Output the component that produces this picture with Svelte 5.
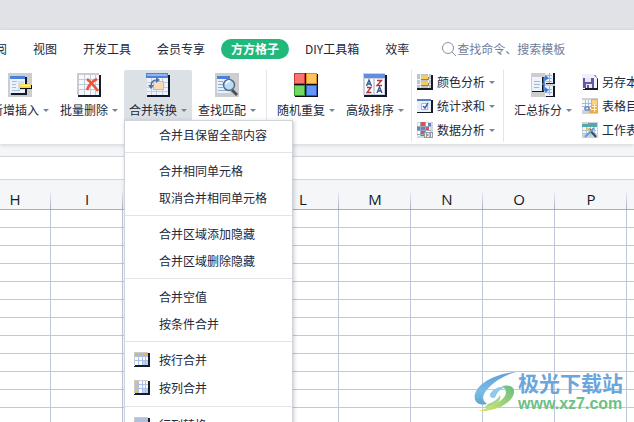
<script lang="ts">
	type Tool = { icon: string; label: string; open?: boolean };

	const tabs = ['审阅', '视图', '开发工具', '会员专享', '方方格子', 'DIY工具箱', '效率'];
	let activeTab = $state('方方格子');

	const editTools: Tool[] = [
		{ icon: 'insert', label: '新增插入' },
		{ icon: 'delete', label: '批量删除' },
		{ icon: 'merge', label: '合并转换', open: true },
		{ icon: 'find', label: '查找匹配' }
	];
	const sortTools: Tool[] = [
		{ icon: 'random', label: '随机重复' },
		{ icon: 'sort', label: '高级排序' }
	];
	const splitTools: Tool[] = [{ icon: 'split', label: '汇总拆分' }];

	const analysisTools: Tool[] = [
		{ icon: 'color', label: '颜色分析' },
		{ icon: 'sum', label: '统计求和' },
		{ icon: 'data', label: '数据分析' }
	];
	const sheetTools: Tool[] = [
		{ icon: 'save', label: '另存本表' },
		{ icon: 'toc', label: '表格目录' },
		{ icon: 'sheet', label: '工作表' }
	];

	const menuGroups: { icon?: string; label: string }[][] = [
		[{ label: '合并且保留全部内容' }],
		[{ label: '合并相同单元格' }, { label: '取消合并相同单元格' }],
		[{ label: '合并区域添加隐藏' }, { label: '合并区域删除隐藏' }],
		[{ label: '合并空值' }, { label: '按条件合并' }],
		[
			{ icon: 'rows', label: '按行合并' },
			{ icon: 'cols', label: '按列合并' }
		],
		[{ icon: 'swap', label: '行列转换' }]
	];

	const columns = ['H', 'I', 'J', 'K', 'L', 'M', 'N', 'O', 'P', 'Q'];
	const rowCount = 12;
</script>

{#snippet bigIcon(name: string)}
	<svg class="icon-lg" viewBox="0 0 24 24" aria-hidden="true">
		{#if name === 'insert'}
			<path fill="#cdcdcd" d="M0 0h24v24H0z" />
			<path fill="#111827" d="M4 4h15v18H3v-2h1z" />
			<path fill="#edf3fc" d="M2 3h15v17H2z" />
			<path fill="#4c80dc" d="M2 3h15v3H2z" />
			<path stroke="#a8bddd" d="M4 8.500h5M4 11.500h4M4 14.500h4M4 17.500h8" />
			<path fill="#d4e1f5" d="M10 8h6v9h-6z" />
			<path fill="#111" d="M12 12h12v4H12z" />
			<path fill="#f3d85b" d="M11 11h12v4H11z" />
			<path stroke="#fff1a0" d="M12 12.500h10" />
		{:else if name === 'delete'}
			<path fill="#171c28" d="M2 2h22v22H1z" />
			<path fill="#c8ccd2" d="M0 0h22v22H0z" />
			<path fill="#f6f9fd" d="M2 2h20v20H2z" />
			<path stroke="#c1ccda" d="M2 6.500h20M2 11.500h20M2 16.500h20M7.500 2v20M13.500 2v20M18.500 2v20" />
			<path fill="none" stroke="#ee5438" stroke-width="2.600" d="M10 6q5 4 11 12M20 6q-7 3-10 11" />
		{:else if name === 'merge'}
			<path fill="#111827" d="M2 2h22v22H1z" />
			<path fill="#eef3fb" d="M1 1h21v21H1z" />
			<path fill="#4f82da" d="M0 0h22v5H0z" />
			<path fill="#90b5f4" d="M1 1h20v2H1z" />
			<path stroke="#c1cee2" d="M1 9.500h21M1 14.500h21M1 18.500h21M5.500 5v17M10.500 5v17M16.500 5v17" />
			<path fill="#fbdab8" stroke="#edaf72" d="M7.500 8.500h10v8h-10z" />
			<path fill="none" stroke="#4a73b2" stroke-width="1.600" d="M5 13q0-6 6-6" />
			<path fill="#4a73b2" d="M10 4l4 3-4 3zM2 12h6l-3 4z" />
		{:else if name === 'find'}
			<path fill="#cdcdcd" d="M0 0h24v24H0z" />
			<path fill="#e8f0fc" d="M2 3h13v17H2z" />
			<path fill="#4c80dc" d="M2 3h13v3H2z" />
			<path stroke="#8eabd8" d="M3 8.500h5M3 11.500h5M3 14.500h5M3 17.500h9" />
			<path stroke="#4b5159" stroke-width="3" d="M17 17l5 5" />
			<circle cx="14" cy="12" r="5.500" fill="#bddcf4" stroke="#536f8e" stroke-width="1.500" />
			<path fill="none" stroke="#f4fbff" stroke-width="2" d="M11 11q1-3 4-3" />
		{:else if name === 'random'}
			<path fill="#111" d="M1 1h23v23H1z" />
			<path fill="#c83c38" d="M0 0h12v12H0z" /><path fill="#fb7471" d="M1 1h9v9H1z" />
			<path fill="#d58c28" d="M12 0h11v12H12z" /><path fill="#ffc35a" d="M13 1h9v9h-9z" />
			<path fill="#319a37" d="M0 12h12v11H0z" /><path fill="#72da60" d="M1 13h9v9H1z" />
			<path fill="#315cb2" d="M12 12h11v11H12z" /><path fill="#6596fa" d="M13 13h9v9h-9z" />
			<path stroke="#111" d="M11.500 0v23M0 11.500h23" />
		{:else if name === 'sort'}
			<path fill="#111827" d="M2 2h22v22H1z" />
			<path fill="#cbd2dc" d="M0 0h22v22H0z" />
			<path fill="#5e8de1" d="M1 1h21v4H1z" />
			<path fill="#fff" d="M2 6h8v15H2zM12 6h9v15h-9z" />
			<path fill="none" stroke="#315a9c" stroke-width="1.400" d="M3.500 13l2.500-6 2.500 6M4.500 11h3M14 20l2.500-6 2.500 6M15 18h3" />
			<path fill="none" stroke="#ac3840" stroke-width="1.400" d="M14 7.500h4.500L14 12.500h5M4 14.500h4L4 19.500h4.500" />
		{:else if name === 'split'}
			<path fill="#cdcdcd" d="M0 0h24v24H0z" />
			<path fill="#111827" d="M1 4h12v15H1zM15 0h9v11h-9zM15 13h9v11h-9z" />
			<path fill="#edf3fc" d="M1 4h10v14H1zM14 0h8v10h-8zM14 13h8v10h-8z" />
			<path stroke="#9fb5d6" d="M3 8.500h6M3 11.500h6M3 14.500h5M15 2.500h6M15 5.500h6M15 8.500h6M15 16.500h6M15 19.500h6M18.500 0v10M18.500 13v9" />
			<path fill="none" stroke="#3e7ad8" stroke-width="1.500" d="M11 11h2V5h2M13 11v6h2" />
			<path fill="#3e7ad8" d="M14 2l4 3-4 3zM14 14l4 3-4 3z" />
		{/if}
	</svg>
{/snippet}

{#snippet smallIcon(name: string)}
	<svg class="icon-sm" viewBox="0 0 16 16" aria-hidden="true">
		{#if name === 'color'}
			<path fill="#171c28" d="M1 1h15v15H0v-1z" />
			<path fill="#bfc6cf" d="M0 0h14v14H0z" />
			<path stroke="#edf1f5" d="M0 5.500h14M0 10.500h14M3.500 0v14M11.500 0v14" />
			<path fill="#a9842c" d="M4 3h8v3H4zM4 9h8v3H4z" />
			<path fill="#f6cf55" d="M4 2h7v3H4zM4 8h7v3H4z" />
		{:else if name === 'sum'}
			<path fill="#171c28" d="M1 2h15v13H0v-1h1z" />
			<path fill="#eaf0fa" d="M0 1h14v13H0z" />
			<path fill="#537fc9" d="M0 1h14v2H0z" />
			<path fill="#fff" stroke="#a3b7df" d="M4.500 5.500h6v6h-6z" />
			<path fill="none" stroke="#3865bb" stroke-width="1.500" d="M6 8l2 2 3-5" />
		{:else if name === 'data'}
			<path fill="#d1d7df" d="M0 0h16v16H0z" />
			<path fill="#fff" d="M1 1h12v13H1z" />
			<path fill="#e64e49" d="M4 0h4v5H4zM4 8h4v6H4zM8 5h4v4H8z" />
			<path fill="#5c87d6" d="M0 5h4v3H0zM4 5h4v3H4zM11 1h3v3h-3z" />
			<path stroke="#9ba9bf" d="M0 4.500h14M0 8.500h14M0 12.500h9M3.500 0v14M8.500 0v14" />
			<path fill="#969ba3" d="M7 10h9v6H7z" />
			<path stroke="#eee" d="M8.500 11v4M10 11.500h2v3h-2M14.500 11v4" fill="none" />
		{:else if name === 'save'}
			<path fill="#171c28" d="M3 1h10l3 4v11H1v-1h2z" />
			<path fill="#eef1f6" d="M0 0h11l4 4v10H0z" />
			<path fill="#6657aa" d="M1 4h11v10H1z" />
			<path fill="#eae7f7" d="M3 4h6v4H3zM4 10h6v4H4z" />
			<path fill="#6657aa" d="M5 11h2v3H5z" />
		{:else if name === 'toc'}
			<path fill="#cfd2d6" d="M0 0h16v16H0z" />
			<path fill="#f4f7fb" d="M0 2h10v10H0z" />
			<path stroke="#a9b9ce" d="M0 5.500h10M0 8.500h10M3.500 2v10M6.500 2v10" />
			<path fill="#efaa43" d="M9 1h7v14H7v-4h2z" />
			<path fill="#ffd080" d="M10 2h5v5h-5z" />
			<path stroke="#fff0ce" d="M10 8.500h5M9 11.500h6M12.500 6v8" />
			<path fill="none" stroke="#668bc8" stroke-width="1.500" d="M3 9h4M3 12h4M3 9v3M7 9v3" />
		{:else if name === 'sheet'}
			<path fill="#cfd2d6" d="M0 0h16v16H0z" />
			<path fill="#f3f8fb" d="M1 2h14v10H1z" />
			<path fill="#55a8aa" d="M0 2h6V1h9v4H0z" />
			<path stroke="#a9c6ce" d="M0 8.500h14M0 11.500h14M4.500 5v9M8.500 5v9M12.500 5v9" />
			<path stroke="#32486f" stroke-width="2" d="M7 7l7 8" />
			<path stroke="#6c98da" stroke-width="2" d="M12 6l-9 9" />
			<path stroke="#f0c34d" stroke-width="2" d="M5 6l3 3" />
		{:else}
			<path fill="#171c28" d="M1 1h15v14H0v-1h1z" />
			<path fill="#c8ccd2" d="M0 0h14v13H0z" />
			<path fill="#f7faff" d="M1 1h13v12H1z" />
			<path fill="#bed2f5" d="M9 8h5v5H9z" />
			{#if name === 'rows'}
				<path fill="#e4b64c" d="M1 1h13v3H1z" />
			{:else if name === 'cols'}
				<path fill="#e9bf58" d="M1 1h3v12H1z" />
			{:else}
				<path fill="#b4c2d6" d="M1 1h13v3H1z" />
			{/if}
			<path stroke="#abc0e2" d="M1 4.500h13M1 8.500h13M4.500 1v12M8.500 1v12M11.500 1v12" />
		{/if}
	</svg>
{/snippet}

{#snippet bigTools(tools: Tool[])}
	<div class="tools">
		{#each tools as tool}
			<div class="tool-wrap">
				<button class="tool" class:open={tool.open} type="button" aria-haspopup="menu" aria-expanded={!!tool.open}>
					{@render bigIcon(tool.icon)}
					<span class="tool-label">{tool.label}<i class="caret"></i></span>
				</button>
				{#if tool.open}
					<div class="menu" role="menu">
						{#each menuGroups as group}
							<div class="menu-group" role="group">
								{#each group as item}
									<button class="menu-item" class:with-icon={item.icon} type="button" role="menuitem">
										<span class="menu-icon">
											{#if item.icon}{@render smallIcon(item.icon)}{/if}
										</span>
										{item.label}
									</button>
								{/each}
							</div>
						{/each}
					</div>
				{/if}
			</div>
		{/each}
	</div>
{/snippet}

{#snippet smallTools(tools: Tool[])}
	<div class="stack">
		{#each tools as tool}
			<button class="small-tool" type="button">
				{@render smallIcon(tool.icon)}
				<span class="tool-label">{tool.label}<i class="caret"></i></span>
			</button>
		{/each}
	</div>
{/snippet}

<div class="window">
	<div class="titlebar"></div>

	<header class="ribbon">
		<nav class="tabs">
			{#each tabs as tab}
				<button class="tab" class:active={tab === activeTab} type="button" onclick={() => (activeTab = tab)}>
					{tab}
				</button>
			{/each}
			<label class="search">
				<svg viewBox="0 0 16 16" aria-hidden="true">
					<circle cx="7" cy="7" r="5.500" />
					<path d="M11 11l4 4" />
				</svg>
				<input type="text" placeholder="查找命令、搜索模板" aria-label="查找命令、搜索模板" />
			</label>
		</nav>

		<div class="toolbar">
			{@render bigTools(editTools)}
			{@render bigTools(sortTools)}
			{@render smallTools(analysisTools)}
			{@render bigTools(splitTools)}
			{@render smallTools(sheetTools)}
		</div>
	</header>

	<div class="formula-bar"></div>

	<main class="sheet">
		<table>
			<thead>
				<tr>
					{#each columns as column}
						<th scope="col">{column}</th>
					{/each}
				</tr>
			</thead>
			<tbody>
				{#each { length: rowCount } as _}
					<tr>
						{#each columns as _column}
							<td></td>
						{/each}
					</tr>
				{/each}
			</tbody>
		</table>
	</main>

	<div class="watermark">
		<svg viewBox="0 0 42 40" aria-hidden="true">
			<defs>
				<linearGradient id="swirl" x1="0" y1="0" x2="0" y2="1">
					<stop offset="0" stop-color="#5d9fdb" />
					<stop offset="0.6" stop-color="#79bde8" />
					<stop offset="1" stop-color="#5fa6c9" />
				</linearGradient>
				<linearGradient id="leaf" x1="1" y1="0" x2="0" y2="1">
					<stop offset="0" stop-color="#63bd83" />
					<stop offset="1" stop-color="#dfe76b" />
				</linearGradient>
			</defs>
			<path fill="url(#swirl)" d="M42 0C25 1 5 9 1 22c-2 8 4 12 12 10-5-3-5-8-1-13C17 12 27 4 42 0z" />
			<path fill="#8dcbed" d="M16 22c3-5 9-8 15-7-4 2-8 5-9 9-1 3-7 3-6-2z" />
			<path fill="url(#leaf)" d="M28 14c8-2 13 1 12 7-2 10-18 19-36 18 14-4 27-11 28-18 0-3-1-5-4-7z" />
			<path fill="#a7d984" d="M14 32c6-2 10-5 12-9 2 5-3 11-16 13z" />
		</svg>
		<div class="watermark-text">
			<span class="site-name">极光下载站</span>
			<span class="site-url">www.xz7.com</span>
		</div>
	</div>
</div>

<style>
	:global(body) {
		margin: 0;
	}

	.window {
		position: relative;
		height: 100vh;
		overflow: hidden;
		background: #fff;
		color: #22283a;
		font: 12px/18px 'Noto Sans CJK SC', sans-serif;
	}

	button,
	input {
		padding: 0;
		border: 0;
		background: none;
		color: inherit;
		font: inherit;
		white-space: nowrap;
	}

	.titlebar {
		height: 30px;
		background: #e0e2e7;
	}

	.ribbon {
		position: relative;
		z-index: 1;
		background: #fff;
		box-shadow: 0 1px 4px rgb(40 50 70 / 18%);
	}

	.tabs {
		display: flex;
		align-items: center;
		gap: 6px;
		height: 38px;
		margin-left: -27px;
	}

	.tab {
		flex: none;
		height: 20px;
		padding: 0 10px;
		border-radius: 10px;
		line-height: 20px;
	}

	.tab.active {
		background: #21b87c;
		color: #fff;
		font-weight: 700;
	}

	.search {
		display: flex;
		flex: 1;
		align-items: center;
		margin-left: 16px;
		color: #717d97;
	}

	.search svg {
		flex: none;
		width: 16px;
		height: 16px;
		fill: none;
		stroke: #8791a8;
	}

	.search input {
		flex: 1;
		min-width: 0;
		outline: 0;
	}

	.search input::placeholder {
		color: #717d97;
		opacity: 1;
	}

	.toolbar {
		display: flex;
		height: 74px;
		padding-top: 2px;
		margin-left: -19px;
	}

	.toolbar > * {
		flex: none;
		height: 72px;
		padding: 0 5px;
	}

	.toolbar > * + * {
		border-left: 1px solid #e3e5e9;
	}

	.tools {
		display: flex;
		gap: 1px;
	}

	.tool-wrap {
		position: relative;
	}

	.tool {
		display: flex;
		flex-direction: column;
		align-items: center;
		gap: 4px;
		width: 68px;
		height: 50px;
		padding-top: 3px;
	}

	.tool.open {
		border-radius: 2px 2px 0 0;
		background: #dce1e6;
	}

	.tool-label {
		display: flex;
		align-items: center;
		gap: 4px;
	}

	.caret {
		border: 3px solid transparent;
		border-top-color: #78849c;
		border-bottom: 0;
	}

	.icon-lg {
		flex: none;
		width: 24px;
		height: 24px;
	}

	.icon-sm {
		flex: none;
		display: block;
		width: 16px;
		height: 16px;
	}

	.stack {
		display: flex;
		flex-direction: column;
		margin-left: -3px;
	}

	.stack:last-child {
		padding-left: 3px;
		border-left: 0;
	}

	.small-tool {
		display: flex;
		align-items: center;
		gap: 4px;
		height: 24px;
		padding-right: 3px;
	}

	.menu {
		position: absolute;
		top: 50px;
		left: 0;
		width: 167px;
		border: 1px solid #d0d4da;
		background: #fff;
		box-shadow: 1px 1px 4px rgb(40 50 70 / 25%);
	}

	.menu-group + .menu-group {
		padding-top: 4px;
		margin-top: 4px;
		border-top: 1px solid #e1e3ea;
	}

	.menu-item {
		display: flex;
		align-items: center;
		width: 100%;
		height: 27px;
		padding-left: 9px;
	}

	.menu-item.with-icon {
		height: 28px;
	}

	.menu-icon {
		width: 25px;
	}

	.formula-bar {
		height: 22px;
		border: solid #d3d6dc;
		border-width: 1px 0;
		margin-top: 12px;
		background: #fff;
		box-shadow: 0 -12px #f4f6f8;
	}

	.sheet {
		overflow: hidden;
	}

	table {
		width: 720px;
		margin-left: -21px;
		border-spacing: 0;
		table-layout: fixed;
	}

	th {
		box-sizing: border-box;
		height: 30px;
		padding: 8px 0 0;
		border-bottom: 1px solid #a4afc6;
		background: linear-gradient(#f4f6f8, #a4afc6) right bottom / 1px 20px no-repeat #f4f6f8;
		color: #16181d;
		font: 15px/20px 'Open Sans', sans-serif;
	}

	td {
		box-sizing: border-box;
		height: 18px;
		padding: 0;
		border: solid #c0c7da;
		border-width: 0 1px 1px 0;
	}

	.watermark {
		position: absolute;
		right: 11px;
		bottom: 8px;
		z-index: 2;
		display: flex;
		align-items: center;
		gap: 2px;
	}

	.watermark svg {
		width: 42px;
		height: 40px;
	}

	.watermark-text {
		display: flex;
		flex-direction: column;
	}

	.site-name {
		color: #6ba5dc;
		font-size: 21px;
		font-weight: 700;
		line-height: 24px;
	}

	.site-url {
		color: #6cc086;
		font: 700 16px/20px 'Liberation Sans', sans-serif;
	}
</style>
